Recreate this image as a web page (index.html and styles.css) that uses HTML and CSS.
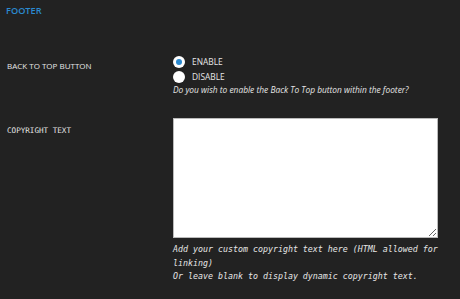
FILE: index.html
```html
<!DOCTYPE html>
<html lang="en">
<head>
    <meta charset="utf-8">
    <link rel="stylesheet" href="styles.css">
</head>
<body>
    <div class="panel">
        <h3 class="titulo">FOOTER</h3>
        <div class="fila">
            <div class="etiqueta">BACK TO TOP BUTTON</div>
            <div class="campo">
                <label class="opcion"><input type="radio" name="btt" checked> ENABLE</label>
                <label class="opcion"><input type="radio" name="btt"> DISABLE</label>
                <p class="ayuda">Do you wish to enable the Back To Top button within the footer?</p>
            </div>
        </div>
        <div class="fila fila2">
            <div class="etiqueta mono">COPYRIGHT TEXT</div>
            <div class="campo">
                <textarea class="texto"></textarea>
                <p class="ayuda mono">Add your custom copyright text here (HTML allowed for linking)<br>Or leave blank to display dynamic copyright text.</p>
            </div>
        </div>
    </div>
</body>
</html>
```

FILE: styles.css
```css
body{
    margin: 0;
    padding: 0;
    background-color: #222222;
    font-family: 'Open Sans', sans-serif;
    color: #e6e6e6;
}
.panel{
    padding: 5px 6px;
}
.titulo{
    margin: 0;
    font-size: 9.2px;
    font-weight: 600;
    color: #2b8ad0;
    line-height: 12px;
}
.fila{
    display: flex;
    margin-top: 37px;
}
.fila2{
    margin-top: 23px;
}
.etiqueta{
    width: 166px;
    flex-shrink: 0;
    padding-left: 1px;
    font-size: 8px;
    padding-top: 6px;
}
.mono{
    font-family: 'DejaVu Sans Mono', monospace;
}
.etiqueta.mono{
    font-size: 7.6px;
    padding-top: 8px;
}
.campo{
    flex: 1;
}
.opcion{
    display: flex;
    align-items: center;
    font-size: 8.4px;
    height: 13px;
    margin-bottom: 1px;
    padding-top: 1px;
}
.opcion input{
    appearance: none;
    -webkit-appearance: none;
    width: 12px;
    height: 12px;
    margin: 0 7px 0 0;
    border-radius: 50%;
    background: #ffffff;
    position: relative;
}
.opcion input:checked::after{
    content: "";
    position: absolute;
    left: 3px;
    top: 3px;
    width: 6px;
    height: 6px;
    border-radius: 50%;
    background: #2b8ad0;
}
.ayuda{
    margin: 1px 0 0 0;
    font-size: 8.4px;
    font-style: italic;
}
.ayuda.mono{
    font-size: 8.3px;
    line-height: 13.5px;
    width: 270px;
    margin-top: 5px;
}
.texto{
    display: block;
    width: 265px;
    height: 120px;
    box-sizing: border-box;
    margin: 0;
    border: 1px solid #bbbbbb;
    background: #ffffff;
}
```
